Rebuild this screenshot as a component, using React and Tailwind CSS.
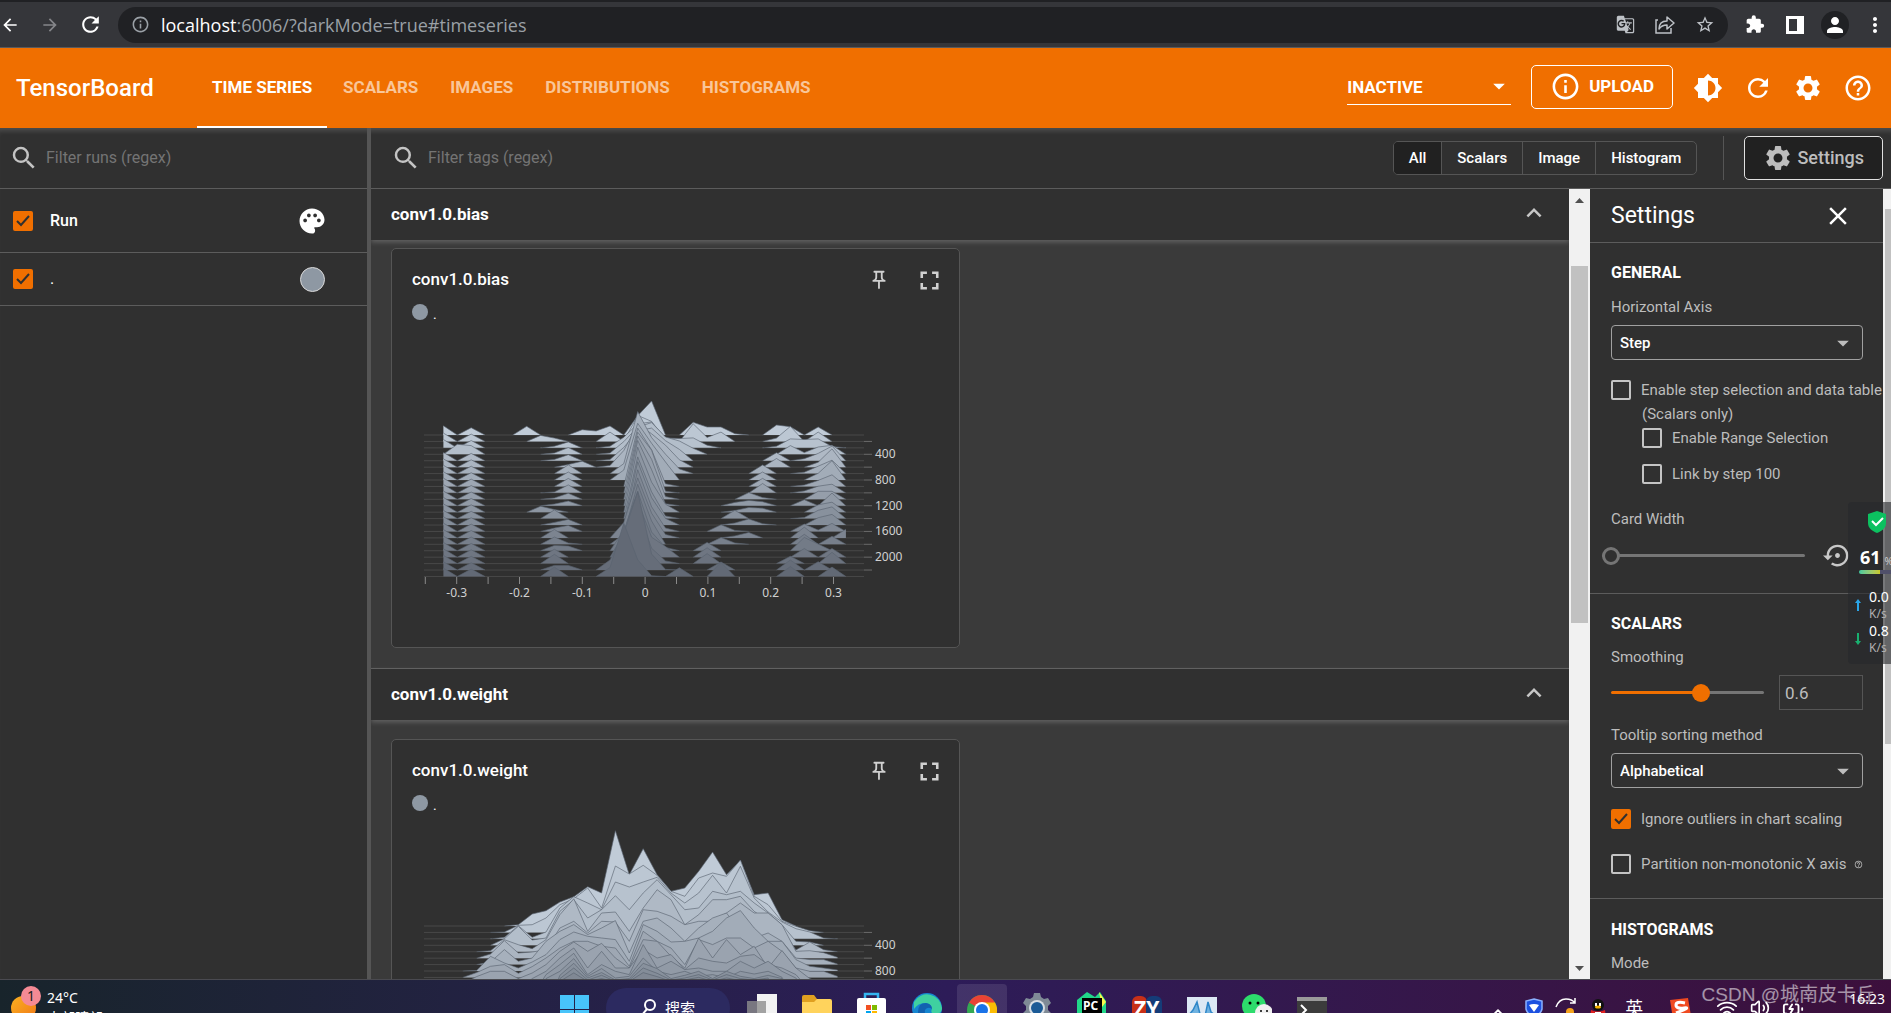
import {
  MdArrowBack,
  MdArrowDropDown,
  MdArrowForward,
  MdBrightness6,
  MdClose,
  MdExpandLess,
  MdExtension,
  MdFullscreen,
  MdGTranslate,
  MdHelpOutline,
  MdInfoOutline,
  MdMoreVert,
  MdOutlinePushPin,
  MdPalette,
  MdPerson,
  MdRefresh,
  MdSearch,
  MdSettings,
  MdSettingsBackupRestore,
  MdStarBorder,
} from "react-icons/md";
import { LuBatteryCharging, LuChevronUp, LuVolume2, LuWifi } from "react-icons/lu";

const tabs = ["TIME SERIES", "SCALARS", "IMAGES", "DISTRIBUTIONS", "HISTOGRAMS"];
const plugins = ["All", "Scalars", "Image", "Histogram"];

// bucket index -> height, one object per step
const edge = { 0: 25, 2: 22 };
const biasRows = [
  { 0: 28, 2: 22, 6: 26, 10: 16, 11: 12, 12: 27, 14: 58, 15: 102, 18: 38, 19: 24, 20: 24, 21: 4, 24: 30, 25: 25, 27: 24 },
  { ...edge, 7: 18, 8: 10, 12: 28, 14: 78, 15: 60, 18: 53, 19: 12, 20: 28, 24: 10, 25: 45, 27: 28 },
  { ...edge, 8: 5, 9: 18, 12: 5, 13: 32, 14: 72, 15: 78, 16: 30, 17: 28, 18: 30, 19: 8, 24: 5, 25: 27, 26: 25, 27: 27, 28: 4 },
  { 1: 30, 2: 26, 8: 4, 9: 20, 12: 4, 13: 38, 14: 82, 15: 95, 16: 52, 17: 40, 18: 18, 25: 26, 26: 5, 27: 22, 28: 27 },
  { ...edge, 8: 4, 9: 18, 12: 4, 13: 40, 14: 90, 15: 98, 16: 60, 17: 34, 24: 24, 26: 6, 27: 22, 28: 44 },
  { ...edge, 9: 8, 10: 18, 12: 5, 13: 50, 14: 130, 15: 100, 16: 66, 17: 22, 24: 26, 27: 15, 28: 55 },
  { ...edge, 9: 26, 13: 30, 14: 186, 15: 108, 16: 58, 17: 14, 23: 26, 26: 4, 27: 22, 28: 40 },
  { ...edge, 9: 24, 13: 30, 14: 170, 15: 110, 16: 54, 23: 24, 27: 20, 28: 58 },
  { ...edge, 9: 24, 14: 175, 15: 110, 16: 8, 23: 24, 26: 4, 27: 18, 28: 35 },
  { ...edge, 8: 3, 9: 24, 14: 182, 15: 128, 16: 5, 23: 28, 26: 6, 27: 20, 28: 26 },
  { ...edge, 8: 4, 9: 18, 14: 190, 15: 120, 16: 8, 22: 20, 23: 5, 27: 24, 28: 24 },
  { ...edge, 8: 5, 9: 14, 14: 196, 15: 108, 16: 6, 21: 10, 22: 16, 23: 12, 26: 18, 28: 38 },
  { ...edge, 7: 18, 8: 8, 14: 195, 15: 90, 16: 24, 21: 5, 22: 14, 23: 12, 27: 22, 28: 30 },
  { ...edge, 8: 26, 14: 185, 15: 80, 16: 8, 21: 25, 26: 3, 27: 25, 28: 35 },
  { ...edge, 8: 8, 9: 17, 14: 190, 15: 82, 16: 20, 21: 6, 22: 18, 23: 4, 27: 22, 28: 32 },
  { ...edge, 8: 10, 9: 18, 14: 185, 15: 74, 16: 10, 20: 20, 21: 3, 26: 22, 27: 4, 28: 24 },
  { ...edge, 8: 25, 13: 46, 14: 180, 15: 74, 16: 10, 21: 6, 22: 16, 26: 32, 29: 26 },
  { ...edge, 8: 22, 9: 4, 13: 30, 14: 180, 15: 70, 20: 20, 21: 4, 26: 30, 28: 24 },
  { ...edge, 8: 16, 9: 14, 13: 60, 14: 178, 15: 56, 16: 10, 19: 25, 26: 40, 27: 20 },
  { ...edge, 8: 24, 13: 70, 14: 168, 15: 60, 16: 32, 19: 28, 26: 26, 28: 26 },
  { ...edge, 8: 28, 13: 90, 14: 160, 15: 46, 16: 8, 19: 30, 25: 22, 28: 34 },
  { ...edge, 8: 14, 9: 14, 12: 30, 13: 110, 14: 235, 15: 48, 16: 2, 20: 24, 25: 30, 27: 25 },
  { ...edge, 8: 28, 12: 27, 13: 160, 14: 50, 15: 2, 17: 26, 20: 42, 25: 30, 28: 28 },
];

// first bucket, then the outline level of every following bucket
const weightLevels = [
  [6, 300, 268, 258, 232, 216, 186, 205, 18, 150, 72, 150, 200, 190, 140, 82, 150, 108, 210, 205, 285],
  [5, 322, 302, 300, 280, 240, 222, 190, 250, 124, 148, 122, 152, 200, 215, 160, 145, 155, 106, 215, 240, 290, 305, 318],
  [5, 338, 303, 338, 322, 250, 216, 235, 255, 172, 187, 172, 158, 205, 235, 205, 152, 205, 125, 220, 262, 292, 312, 322, 340],
  [5, 342, 305, 346, 340, 260, 225, 280, 255, 213, 255, 205, 165, 210, 255, 250, 200, 210, 200, 235, 265, 300, 350, 352],
  [4, 378, 345, 360, 372, 345, 270, 222, 320, 265, 262, 320, 250, 195, 225, 300, 270, 225, 225, 215, 260, 290, 310, 376, 352, 375],
  [4, 388, 348, 385, 382, 375, 310, 290, 325, 290, 292, 350, 255, 260, 275, 300, 290, 290, 265, 235, 265, 265, 300, 380, 378, 384, 398],
  [4, 412, 375, 410, 400, 350, 320, 300, 330, 310, 288, 385, 290, 280, 310, 350, 310, 280, 265, 320, 340, 325, 350, 400, 405, 405, 418],
  [3, 438, 395, 415, 430, 412, 390, 345, 322, 335, 340, 345, 410, 300, 320, 352, 350, 340, 320, 280, 258, 310, 350, 350, 405, 425, 430, 436],
  [3, 444, 425, 420, 446, 426, 400, 370, 350, 350, 365, 370, 425, 320, 350, 370, 420, 345, 360, 340, 340, 370, 350, 380, 430, 440, 440, 455],
  [3, 456, 440, 440, 462, 445, 420, 380, 352, 380, 356, 400, 430, 345, 350, 395, 430, 340, 400, 345, 390, 365, 430, 378, 430, 462],
  [7, 462, 440, 400, 370, 430, 380, 430, 430, 375, 400, 390, 435, 400, 410, 415, 395, 390, 420, 430, 450],
  [8, 450, 420, 386, 450, 420, 440, 450, 360, 430, 410, 435, 430, 440, 440, 410, 430, 410, 440, 460],
  [8, 462, 440, 402, 455, 432, 460, 455, 400, 440, 450, 440, 455, 450, 460, 440, 448, 440, 458],
  [9, 452, 416, 460, 444, 466, 462, 416, 432, 462, 452, 440, 462, 440, 455, 462, 452, 462],
  [9, 462, 430, 466, 452, 470, 466, 430, 446, 466, 460, 450, 466, 450, 462, 466, 460],
  [9, 470, 445, 470, 462, 472, 470, 444, 456, 470, 466, 458, 470, 460, 468],
];

const weightRows = Array.from({ length: 23 }, (_, step) => {
  const [first, ...levels] = weightLevels[step] ?? [10];
  const row = {};
  levels.forEach((level, i) => {
    row[first + i] = Math.max(0, 304 + 19.3 * step - level);
  });
  return row;
});

const rowY = (step) => 107 + step * 6.43;

const rowColor = (step) => {
  const t = step / 22;
  const mix = (a, b) => Math.round(a + (b - a) * t);
  return `rgb(${mix(192, 98)},${mix(203, 105)},${mix(215, 117)})`;
};

const Ridge = ({ row, step, startX }) => {
  const y = rowY(step);
  const points = Array.from(
    { length: 30 },
    (_, i) => `${(startX + i * 13.88).toFixed(1)},${(y - (row[i] ?? 0) / 3).toFixed(1)}`
  );
  // empty stretches between the ridges are left open
  const shapes = [];
  let run = [];
  for (let i = 0; i < 30; i++) {
    if (row[i] || row[i - 1] || row[i + 1]) run.push(i);
    if ((!row[i] && run.length > 1) || i === 29) {
      if (run.length > 1) shapes.push(run);
      run = row[i + 1] ? [i] : [];
    }
  }
  return (
    <g>
      <line x1="4" x2="444" y1={y} y2={y} stroke="#484848" />
      {shapes.map((s) => {
        const x1 = startX + s[0] * 13.88;
        const x2 = startX + s[s.length - 1] * 13.88;
        const line = s.map((i) => points[i]).join(" ");
        return (
          <g key={s[0]}>
            <polygon points={`${x1},${y} ${line} ${x2},${y}`} fill={rowColor(step)} />
            <polyline points={line} fill="none" stroke="#59636f" strokeOpacity="0.7" strokeWidth="0.9" />
          </g>
        );
      })}
    </g>
  );
};

const Histogram = ({ rows, startX }) => (
  <svg
    width="500"
    height="280"
    viewBox="0 0 500 280"
    className="block"
    fontFamily='"Noto Sans", "Open Sans", sans-serif'
    fontSize="12"
    fill="#d0d0d0"
  >
    {rows.map((row, step) => (
      <Ridge key={step} row={row} step={step} startX={startX} />
    ))}
    {Array.from({ length: 14 }, (_, i) => (
      <line key={i} x1={5.3 + i * 31.4} x2={5.3 + i * 31.4} y1="249" y2="256" stroke="#8a8a8a" />
    ))}
    {["-0.3", "-0.2", "-0.1", "0", "0.1", "0.2", "0.3"].map((label, i) => (
      <text key={label} x={36.7 + i * 62.8} y="269" textAnchor="middle">
        {label}
      </text>
    ))}
    {Array.from({ length: 11 }, (_, i) => (
      <line key={i} x1="444" x2="452" y1={rowY(i * 2 + 1)} y2={rowY(i * 2 + 1)} stroke="#6a6a6a" />
    ))}
    {[400, 800, 1200, 1600, 2000].map((label, i) => (
      <text key={label} x="455" y={rowY(3 + i * 4) + 4}>
        {label}
      </text>
    ))}
  </svg>
);

const IconButton = ({ label, className = "", children }) => (
  <button aria-label={label} className={`flex shrink-0 items-center justify-center ${className}`}>
    {children}
  </button>
);

const Checkbox = ({ id, checked }) => (
  <span className="relative flex h-5 w-5 shrink-0">
    <input
      id={id}
      type="checkbox"
      defaultChecked={checked}
      aria-label={id}
      className="peer h-5 w-5 appearance-none rounded-xs border-2 border-[#c4c4c4] checked:border-[#f06f00] checked:bg-[#f06f00]"
    />
    <svg
      viewBox="0 0 20 20"
      className="pointer-events-none absolute inset-0 hidden h-5 w-5 fill-none stroke-[#303030] stroke-2 peer-checked:block"
    >
      <path d="M4 10l4 4 8-9" />
    </svg>
  </span>
);

const CheckRow = ({ id, label, checked, className = "" }) => (
  <div className={`flex items-center gap-[10px] ${className}`}>
    <Checkbox id={id} checked={checked} />
    <label htmlFor={id} className="whitespace-nowrap">
      {label}
    </label>
  </div>
);

const BrowserBar = () => (
  <div className="shrink-0 border-t-2 border-[#202124] bg-[#35363a]">
    <div className="flex h-[46px] items-center border-b border-[#5a5a5c] text-white">
      <IconButton label="Back" className="w-5">
        <MdArrowBack size={22} />
      </IconButton>
      <IconButton label="Forward" className="ml-5 w-5 text-[#85868a]">
        <MdArrowForward size={22} />
      </IconButton>
      <IconButton label="Reload" className="ml-5 w-5">
        <MdRefresh size={25} className="shrink-0" />
      </IconButton>
      <div className="ml-[18px] flex h-9 flex-1 items-center rounded-full bg-[#202124] pr-[13px] pl-[13px]">
        <MdInfoOutline size={19} className="text-[#9aa0a6]" />
        <input
          aria-label="Address"
          className="sr-only"
          defaultValue="localhost:6006/?darkMode=true#timeseries"
        />
        <p className="ml-[11px] flex-1 font-['Open_Sans','Noto_Sans',sans-serif] text-lg text-[#9aa0a6]">
          <span className="text-white">localhost</span>:6006/?darkMode=true#timeseries
        </p>
        <div className="flex items-center gap-5 text-[#bdc1c6]">
          <IconButton label="Translate" className="w-5">
            <MdGTranslate size={19} />
          </IconButton>
          <IconButton label="Share" className="w-5">
            <svg width="20" height="20" viewBox="0 0 20 20" fill="none" stroke="currentColor" strokeWidth="1.5">
              <path d="M3 5H1v13h15v-5" />
              <path d="M4 14c0-5 3-8 8-8V2l7 6-7 6v-4c-4 0-6 1-8 4z" strokeLinejoin="round" />
            </svg>
          </IconButton>
          <IconButton label="Bookmark" className="w-5">
            <MdStarBorder size={21} />
          </IconButton>
        </div>
      </div>
      <div className="flex items-center gap-5 pr-[6px] pl-[17px]">
        <IconButton label="Extensions" className="w-5">
          <MdExtension size={21} />
        </IconButton>
        <IconButton label="Side panel" className="w-5">
          <svg width="20" height="20" viewBox="0 0 20 20">
            <rect x="1" y="1" width="18" height="18" fill="#fff" />
            <rect x="4" y="4" width="8" height="12" fill="#35363a" />
          </svg>
        </IconButton>
        <IconButton label="Profile" className="-mx-1 h-7 w-7 rounded-full bg-[#202124]">
          <MdPerson size={24} />
        </IconButton>
        <IconButton label="Menu" className="w-5">
          <MdMoreVert size={24} className="shrink-0" />
        </IconButton>
      </div>
    </div>
  </div>
);

const Header = () => (
  <header className="flex h-20 shrink-0 items-center bg-[#f06f00] pr-[18px] pl-4 text-white">
    <h1 className="w-[181px] text-2xl font-medium">TensorBoard</h1>
    <nav className="flex flex-1 self-stretch text-[17px] font-bold">
      {tabs.map((tab, i) => (
        <a
          key={tab}
          href={`#${tab}`}
          className={
            i === 0
              ? "flex items-center border-b-2 border-white px-[15px] pt-[2px]"
              : "flex items-center px-4 text-[#f9c699]"
          }
        >
          {tab}
        </a>
      ))}
    </nav>
    <div className="relative mr-5 w-[164px] border-b border-white">
      <select aria-label="Plugins" className="h-8 w-full appearance-none text-[17px] font-bold outline-none">
        <option>INACTIVE</option>
      </select>
      <MdArrowDropDown size={28} className="pointer-events-none absolute top-0 -right-[2px]" />
    </div>
    <button className="mr-5 mb-[3px] flex h-11 items-center gap-2 rounded-[5px] border border-white px-[18px] text-[17px] font-bold">
      <MdInfoOutline size={31} />
      UPLOAD
    </button>
    <div className="flex items-center gap-5">
      <IconButton label="Dark mode">
        <MdBrightness6 size={30} />
      </IconButton>
      <IconButton label="Reload data">
        <MdRefresh size={30} />
      </IconButton>
      <IconButton label="Global settings">
        <MdSettings size={30} />
      </IconButton>
      <IconButton label="Help">
        <MdHelpOutline size={30} />
      </IconButton>
    </div>
  </header>
);

const Filter = ({ placeholder, className = "" }) => (
  <div className={`flex items-center gap-[7px] ${className}`}>
    <MdSearch size={30} className="shrink-0 text-[#c4c4c4]" />
    <input
      type="text"
      aria-label={placeholder}
      placeholder={placeholder}
      className="min-w-0 flex-1 text-base outline-none placeholder:text-[#747474]"
    />
  </div>
);

const RunsPanel = () => (
  <aside className="w-[367px] shrink-0">
    <Filter placeholder="Filter runs (regex)" className="h-[61px] border-b border-[#5c5c5c] pl-[9px]" />
    <div className="flex h-16 items-center border-b border-[#5c5c5c] pr-10 pl-[13px]">
      <Checkbox id="All runs" checked />
      <span className="ml-[17px] flex-1 text-base font-medium">Run</span>
      <IconButton label="Colour runs">
        <MdPalette size={30} />
      </IconButton>
    </div>
    <div className="flex h-[53px] items-center border-b border-[#5c5c5c] pr-[42px] pl-[13px]">
      <Checkbox id="Run ." checked />
      <span className="ml-[17px] flex-1 text-base">.</span>
      <button aria-label="Run colour" className="h-[25px] w-[25px] rounded-full border border-[#d8d8d8] bg-[#8e98a3]" />
    </div>
  </aside>
);

const Card = ({ title, rows, startX }) => (
  <article className="h-[400px] w-[569px] rounded-[5px] border border-[#555] bg-[#303030]">
    <div className="flex h-[62px] items-center gap-5 pr-[14px] pl-5 text-[#d0d0d0]">
      <h3 className="flex-1 text-[17px] font-medium text-white">{title}</h3>
      <IconButton label="Pin card">
        <MdOutlinePushPin size={22} className="mr-1" />
      </IconButton>
      <IconButton label="Full size">
        <MdFullscreen size={31} />
      </IconButton>
    </div>
    <div className="-mt-[7px] flex h-4 items-center gap-[5px] pl-5">
      <span className="h-4 w-4 rounded-full bg-[#8e98a3]" />
      <span className="pt-1 text-sm">.</span>
    </div>
    <div className="mt-2 pl-7">
      <Histogram rows={rows} startX={startX} />
    </div>
  </article>
);

const Group = ({ title, className = "", children }) => (
  <section>
    <div className="relative flex h-[51px] items-center justify-between bg-[#303030] pr-5 pl-5 shadow-[0_2px_5px_rgba(255,255,255,0.22)]">
      <h2 className="text-[17px] font-bold">{title}</h2>
      <IconButton label={`Collapse ${title}`} className="pb-1">
        <MdExpandLess size={30} className="text-[#c8c8c8]" />
      </IconButton>
    </div>
    <div className={`pb-5 pl-5 ${className}`}>{children}</div>
  </section>
);

const Dropdown = ({ id, label, value, className = "" }) => (
  <div className={className}>
    <label htmlFor={id} className="block">
      {label}
    </label>
    <div className="relative mt-2">
      <select
        id={id}
        className="h-[35px] w-full appearance-none rounded-sm border border-[#a0a0a0] px-2 font-medium text-white outline-none"
      >
        <option>{value}</option>
      </select>
      <MdArrowDropDown size={28} className="pointer-events-none absolute top-1 right-[6px]" />
    </div>
  </div>
);

const SettingsPane = () => (
  <aside className="w-[293px] shrink-0 overflow-hidden text-[15px] leading-5 text-[#bdbdbd]">
    <div className="flex h-[54px] items-center justify-between border-b border-[#5c5c5c] pr-[30px] pl-[21px] text-white">
      <h2 className="text-[23px]">Settings</h2>
      <IconButton label="Close settings">
        <MdClose size={30} />
      </IconButton>
    </div>
    <section className="border-b border-[#5c5c5c] pt-5 pr-5 pb-[23px] pl-[21px]">
      <h3 className="text-base leading-5 font-bold text-white">GENERAL</h3>
      <Dropdown id="axis" label="Horizontal Axis" value="Step" className="mt-[14px]" />
      <CheckRow id="step-select" label="Enable step selection and data table" className="mt-5" />
      <p className="mt-1 pl-[31px]">(Scalars only)</p>
      <CheckRow id="range" label="Enable Range Selection" className="mt-1 pl-[31px]" />
      <CheckRow id="link" label="Link by step 100" className="mt-4 pl-[31px]" />
      <label htmlFor="card-width" className="mt-[25px] block">
        Card Width
      </label>
      <div className="mt-3 -ml-[9px] flex items-center gap-[18px]">
        <input
          id="card-width"
          type="range"
          defaultValue="0"
          className="h-[3px] w-[203px] appearance-none rounded bg-[#757575] [&::-webkit-slider-thumb]:h-[18px] [&::-webkit-slider-thumb]:w-[18px] [&::-webkit-slider-thumb]:appearance-none [&::-webkit-slider-thumb]:rounded-full [&::-webkit-slider-thumb]:border-[3px] [&::-webkit-slider-thumb]:border-[#757575] [&::-webkit-slider-thumb]:bg-[#303030]"
        />
        <IconButton label="Reset card width">
          <MdSettingsBackupRestore size={29} className="text-[#c8c8c8]" />
        </IconButton>
      </div>
    </section>
    <section className="border-b border-[#5c5c5c] pt-5 pr-5 pb-6 pl-[21px]">
      <h3 className="text-base leading-5 font-bold text-white">SCALARS</h3>
      <label htmlFor="smoothing" className="mt-[13px] block">
        Smoothing
      </label>
      <div className="mt-2 flex items-center justify-between">
        <input
          id="smoothing"
          type="range"
          min="0"
          max="1"
          step="0.01"
          defaultValue="0.6"
          className="h-[3px] w-[153px] appearance-none rounded bg-linear-to-r from-[#f06f00] from-60% to-[#757575] to-60% [&::-webkit-slider-thumb]:h-[18px] [&::-webkit-slider-thumb]:w-[18px] [&::-webkit-slider-thumb]:appearance-none [&::-webkit-slider-thumb]:rounded-full [&::-webkit-slider-thumb]:bg-[#f06f00]"
        />
        <input
          type="text"
          aria-label="Smoothing value"
          defaultValue="0.6"
          className="h-[35px] w-[84px] border border-[#555] px-[5px] text-[17px] outline-none"
        />
      </div>
      <Dropdown id="sorting" label="Tooltip sorting method" value="Alphabetical" className="mt-[15px]" />
      <CheckRow id="outliers" label="Ignore outliers in chart scaling" checked className="mt-[21px]" />
      <div className="mt-[25px] flex items-center gap-2">
        <CheckRow id="partition" label="Partition non-monotonic X axis" />
        <MdHelpOutline size={9} className="shrink-0" />
      </div>
    </section>
    <section className="pt-[21px] pl-[21px]">
      <h3 className="text-base leading-5 font-bold text-white">HISTOGRAMS</h3>
      <p className="mt-[13px]">Mode</p>
    </section>
  </aside>
);

const MainPanel = () => (
  <main className="flex min-w-0 flex-1 flex-col border-l-4 border-[#555]">
    <div className="flex h-[61px] shrink-0 items-center border-b border-[#5c5c5c] pr-2 pl-5">
      <Filter placeholder="Filter tags (regex)" className="flex-1" />
      <div className="flex h-[34px] divide-x divide-[#555] overflow-hidden rounded-[5px] border border-[#555] text-[15px] font-medium">
        {plugins.map((name, i) => (
          <button key={name} className={i === 0 ? "bg-[#212121] px-[15px]" : "px-[15px]"}>
            {name}
          </button>
        ))}
      </div>
      <div className="mr-5 ml-[26px] h-11 w-px bg-[#555]" />
      <button className="flex h-11 items-center gap-1 rounded-[5px] border border-[#e0e0e0] bg-[#212121] px-[18px] text-lg font-medium text-[#bdbdbd]">
        <MdSettings size={30} />
        Settings
      </button>
    </div>
    <div className="flex min-h-0 flex-1">
      <div className="min-w-0 flex-1 overflow-hidden bg-[#3a3a3a]">
        <Group title="conv1.0.bias" className="pt-2">
          <Card title="conv1.0.bias" rows={biasRows} startX={23.4} />
        </Group>
        <div className="border-t border-[#5c5c5c]">
          <Group title="conv1.0.weight" className="pt-[19px]">
            <Card title="conv1.0.weight" rows={weightRows} startX={15} />
          </Group>
        </div>
      </div>
      <div className="flex w-[21px] shrink-0 flex-col items-center bg-[#f1f1f1] text-[#505050]">
        <svg width="9" height="77" viewBox="0 0 9 77" fill="currentColor">
          <path d="M0 14l4.500-5 4.500 5z" />
        </svg>
        <div className="h-[357px] w-[17px] bg-[#c1c1c1]" />
        <svg width="9" height="5" viewBox="0 0 9 5" fill="currentColor" className="mt-auto mb-2">
          <path d="M0 0l4.500 5L9 0z" />
        </svg>
      </div>
      <SettingsPane />
      <div className="w-2 shrink-0 bg-[#f1f1f1] pt-5 pl-[2px]">
        <div className="h-[535px] bg-[#c1c1c1]" />
      </div>
    </div>
  </main>
);

const SpeedWidget = () => (
  <div className="absolute top-[502px] right-0 h-[162px] w-[43px] overflow-hidden rounded-l bg-[#26282c]/60 font-['Noto_Sans',sans-serif] text-white">
    <svg width="18" height="22" viewBox="0 0 18 22" className="mt-[9px] ml-5">
      <path d="M9 0l9 3v9c0 5-4 8-9 10-5-2-9-5-9-10V3z" fill="#0cc160" />
      <path d="M4 10l4 4 7-7" fill="none" stroke="#fff" strokeWidth="2" />
    </svg>
    <div className="mt-3 ml-3 flex items-end leading-6 whitespace-nowrap">
      <b className="text-[18px]">61</b>
      <span className="ml-1 text-[10px] leading-4 text-[#ccc]">%</span>
    </div>
    <div className="mt-px ml-[11px] flex h-1">
      <div className="w-[21px] rounded-l bg-linear-to-r from-[#3fc9a0] to-[#c8c820]" />
      <div className="flex-1 bg-[#50506a]" />
    </div>
    {[
      ["0.0", "#2aa5e8", "M3 0l3 4H4v8H2V4H0z"],
      ["0.8", "#18b070", "M3 12l3-4H4V0H2v8H0z"],
    ].map(([speed, color, arrow], i) => (
      <div key={speed} className={i === 0 ? "mt-[14px] flex items-center pl-[7px]" : "flex items-center pl-[7px]"}>
        <svg width="6" height="12" viewBox="0 0 6 12" fill={color} className="shrink-0">
          <path d={arrow} />
        </svg>
        <div className="ml-2 text-sm leading-[17px]">
          {speed}
          <div className="text-xs leading-[17px] text-[#b0b0b0]">K/s</div>
        </div>
      </div>
    ))}
  </div>
);

const apps = [
  ["Task view", <><rect x="10" y="2" width="20" height="26" fill="#f2f2f2" /><rect x="0" y="9" width="19" height="22" fill="#8d8d8d" opacity=".8" /></>],
  ["Explorer", <><path d="M0 5q0-2 2-2h10l3 4v10H0z" fill="#e0a020" /><path d="M0 10h12l3-3h13q2 0 2 2v21H0z" fill="#ffd35c" /></>],
  ["Store", <><path d="M8 7V2h13v5" fill="none" stroke="#35b5f0" strokeWidth="2.500" /><rect y="6" width="29" height="24" rx="2" fill="#fff" /><path d="M9 13h5v5H9z" fill="#f25022" /><path d="M15 13h5v5h-5z" fill="#7fba00" /><path d="M9 19h5v5H9z" fill="#00a4ef" /><path d="M15 19h5v5h-5z" fill="#ffb900" /></>],
  ["Edge", <><circle cx="15" cy="16" r="15" fill="#1686d0" /><path d="M2 10A15 15 0 0 1 30 16q0 6-8 6-4-1-2-5-1-6-7-6-7 0-11 6z" fill="#3fd0a0" /><path d="M6 20q0-9 8-9 6 1 6 6-4-3-7 1-1 6 5 12H12q-6-4-6-10z" fill="#1261b0" /></>],
  ["Chrome", <><circle cx="15" cy="16" r="15" fill="#34a853" /><path d="M2 8.500a15 15 0 0 1 26 0L15 16z" fill="#ea4335" /><path d="M28 8.500A15 15 0 0 1 15 31l-2-8 5-14.500z" fill="#fbbc04" /><circle cx="15" cy="16" r="8" fill="#fff" /><circle cx="15" cy="16" r="6" fill="#1a73e8" /></>],
  ["Settings", <><path d="M12 1h6l1 4 3 2 4-1 3 5-3 3v4l3 3-3 5-4-1-3 2-1 4h-6l-1-4-3-2-4 1-3-5 3-3v-4l-3-3 3-5 4 1 3-2z" fill="#7f8a96" /><circle cx="15" cy="16" r="8" fill="#d8dee4" /><circle cx="15" cy="16" r="6" fill="#1b5a96" /></>],
  ["PyCharm", <><path d="M0 8L10 0l8 5 5-5 6 9v21H0z" fill="#21d789" /><path d="M22 0l7 10-4 5z" fill="#fcf84a" /><rect x="5" y="6" width="20" height="25" fill="#000" /><text x="6" y="18" fontSize="12" fontWeight="bold" fill="#fff">PC</text></>],
  ["ZY Player", <><rect y="4" width="15" height="26" rx="6" fill="#c83018" /><rect x="14" y="4" width="16" height="26" rx="6" fill="#153c78" /><text x="2" y="24" fontSize="21" fontWeight="bold" fill="#fff">ZY</text></>],
  ["Monitor", <><rect y="5" width="30" height="25" fill="#dce8f4" /><path d="M1 24l5-6 4-8 3 12 5 2 3-14 3 10 5 4V30H1z" fill="#6fb2e0" stroke="#2f87c8" strokeWidth="1.500" /></>],
  ["WeChat", <><circle cx="12" cy="14" r="12" fill="#2ddc6c" /><circle cx="22" cy="21" r="9" fill="#f0f0f0" /><circle cx="8" cy="11" r="1.500" /><circle cx="16" cy="11" r="1.500" /><circle cx="19" cy="19" r="1" /><circle cx="25" cy="19" r="1" /></>],
  ["Terminal", <><rect y="5" width="30" height="25" fill="#3c3c3c" /><rect y="5" width="30" height="4" fill="#9a9a9a" /><path d="M4 13l5 5-5 5" fill="none" stroke="#fff" strokeWidth="2" /></>],
];

const Taskbar = () => (
  <footer className="grid h-[34px] shrink-0 grid-cols-[1fr_auto_1fr] overflow-hidden border-t border-[#4a4a50] bg-linear-to-r from-[#18242b] via-[#2d1c58] via-50% to-[#3c0f3c] font-['Noto_Sans','Noto_Sans_CJK_SC',sans-serif] text-white">
    <div className="relative flex h-12 items-start gap-[11px] pt-2 pl-[11px] text-sm leading-5">
      <div className="mt-2 h-6 w-[25px] rounded-full bg-linear-to-br from-[#f9b020] to-[#f07818]" />
      <span className="absolute top-[6px] left-[21px] h-5 w-5 rounded-full bg-[#f58a94] text-center text-[#202020]">1</span>
      <p>
        24°C
        <br />
        大部晴朗
      </p>
    </div>
    <div className="flex h-12 items-start gap-[25px] pr-1">
      <svg width="29" height="31" viewBox="0 0 29 31" fill="#48c4fa" className="mt-[15px]">
        <path d="M0 0h14v14H0zM15 0h14v14H15zM0 15h14v14H0zM15 15h14v14H15z" />
      </svg>
      <button className="-mx-2 mt-2 flex h-10 w-[124px] items-center justify-center gap-2 rounded-full bg-[#2c2a60] text-[15px]">
        <svg width="16" height="18" viewBox="0 0 16 18" fill="none" stroke="#fff" strokeWidth="2">
          <circle cx="9" cy="6" r="5" />
          <path d="M6 10l-5 6" />
        </svg>
        搜索
      </button>
      {apps.map(([name, icon]) => (
        <button
          key={name}
          aria-label={name}
          className={name === "Chrome" ? "-mx-[10px] mt-1 h-11 rounded bg-white/10 px-[10px] pt-2" : "mt-3"}
        >
          <svg width="30" height="32" viewBox="0 0 30 32">
            {icon}
          </svg>
        </button>
      ))}
    </div>
    <div className="flex h-12 items-start justify-end gap-3 pt-[18px] pr-[6px]">
      <LuChevronUp size={22} className="mt-1 mr-1" />
      <svg width="18" height="20" viewBox="0 0 18 20">
        <path d="M9 1l8 2v8q-1 5-8 8-7-3-8-8V3z" fill="#1c50e0" stroke="#8ab0ff" strokeWidth="1.500" />
        <path d="M4 7q5-2 10 0l-5 7z" fill="#fff" />
      </svg>
      <svg width="22" height="20" viewBox="0 0 22 20" fill="none" stroke="#fff" strokeWidth="1.500">
        <path d="M1 9Q4 1 11 1q6 0 9 4M20 0v5h-5" />
        <circle cx="15" cy="14" r="4" fill="#f5a31c" stroke="none" />
      </svg>
      <svg width="18" height="20" viewBox="0 0 18 20">
        <circle cx="9" cy="7" r="6" fill="#111" />
        <path d="M6 5h2v3H6zM10 5h2v3h-2z" fill="#fff" />
        <ellipse cx="9" cy="9" rx="3" ry="1.500" fill="#f7b500" />
        <path d="M2 12q7 3 14 0l1 8H1z" fill="#e02020" />
        <path d="M6 14h6v6H6z" fill="#fff" />
      </svg>
      <span className="-mt-1 mr-[14px] ml-[6px] text-lg">英</span>
      <svg width="22" height="20" viewBox="0 0 22 20" className="mr-[13px]">
        <path d="M1 2l18-2 3 18-18 3z" fill="#f04a20" />
        <path d="M16 5q-9-2-9 2t8 3-8 5" fill="none" stroke="#fff" strokeWidth="3" />
      </svg>
      <LuWifi size={22} />
      <LuVolume2 size={20} />
      <LuBatteryCharging size={22} className="mr-[33px]" />
      <span className="-mt-[10px] text-[14px]">16:23</span>
    </div>
  </footer>
);

export default function App() {
  return (
    <div className="relative flex h-screen flex-col overflow-hidden bg-[#303030] font-['Roboto','Noto_Sans_CJK_SC',sans-serif] text-white">
      <BrowserBar />
      <Header />
      <div className="flex min-h-0 flex-1 shadow-[inset_0_6px_5px_-3px_rgba(255,255,255,0.14)]">
        <RunsPanel />
        <MainPanel />
      </div>
      <Taskbar />
      <SpeedWidget />
      <p className="absolute right-4 bottom-1 font-['Liberation_Sans','Noto_Sans_CJK_SC',sans-serif] text-[19px] text-white/55">
        CSDN @城南皮卡丘
      </p>
    </div>
  );
}
